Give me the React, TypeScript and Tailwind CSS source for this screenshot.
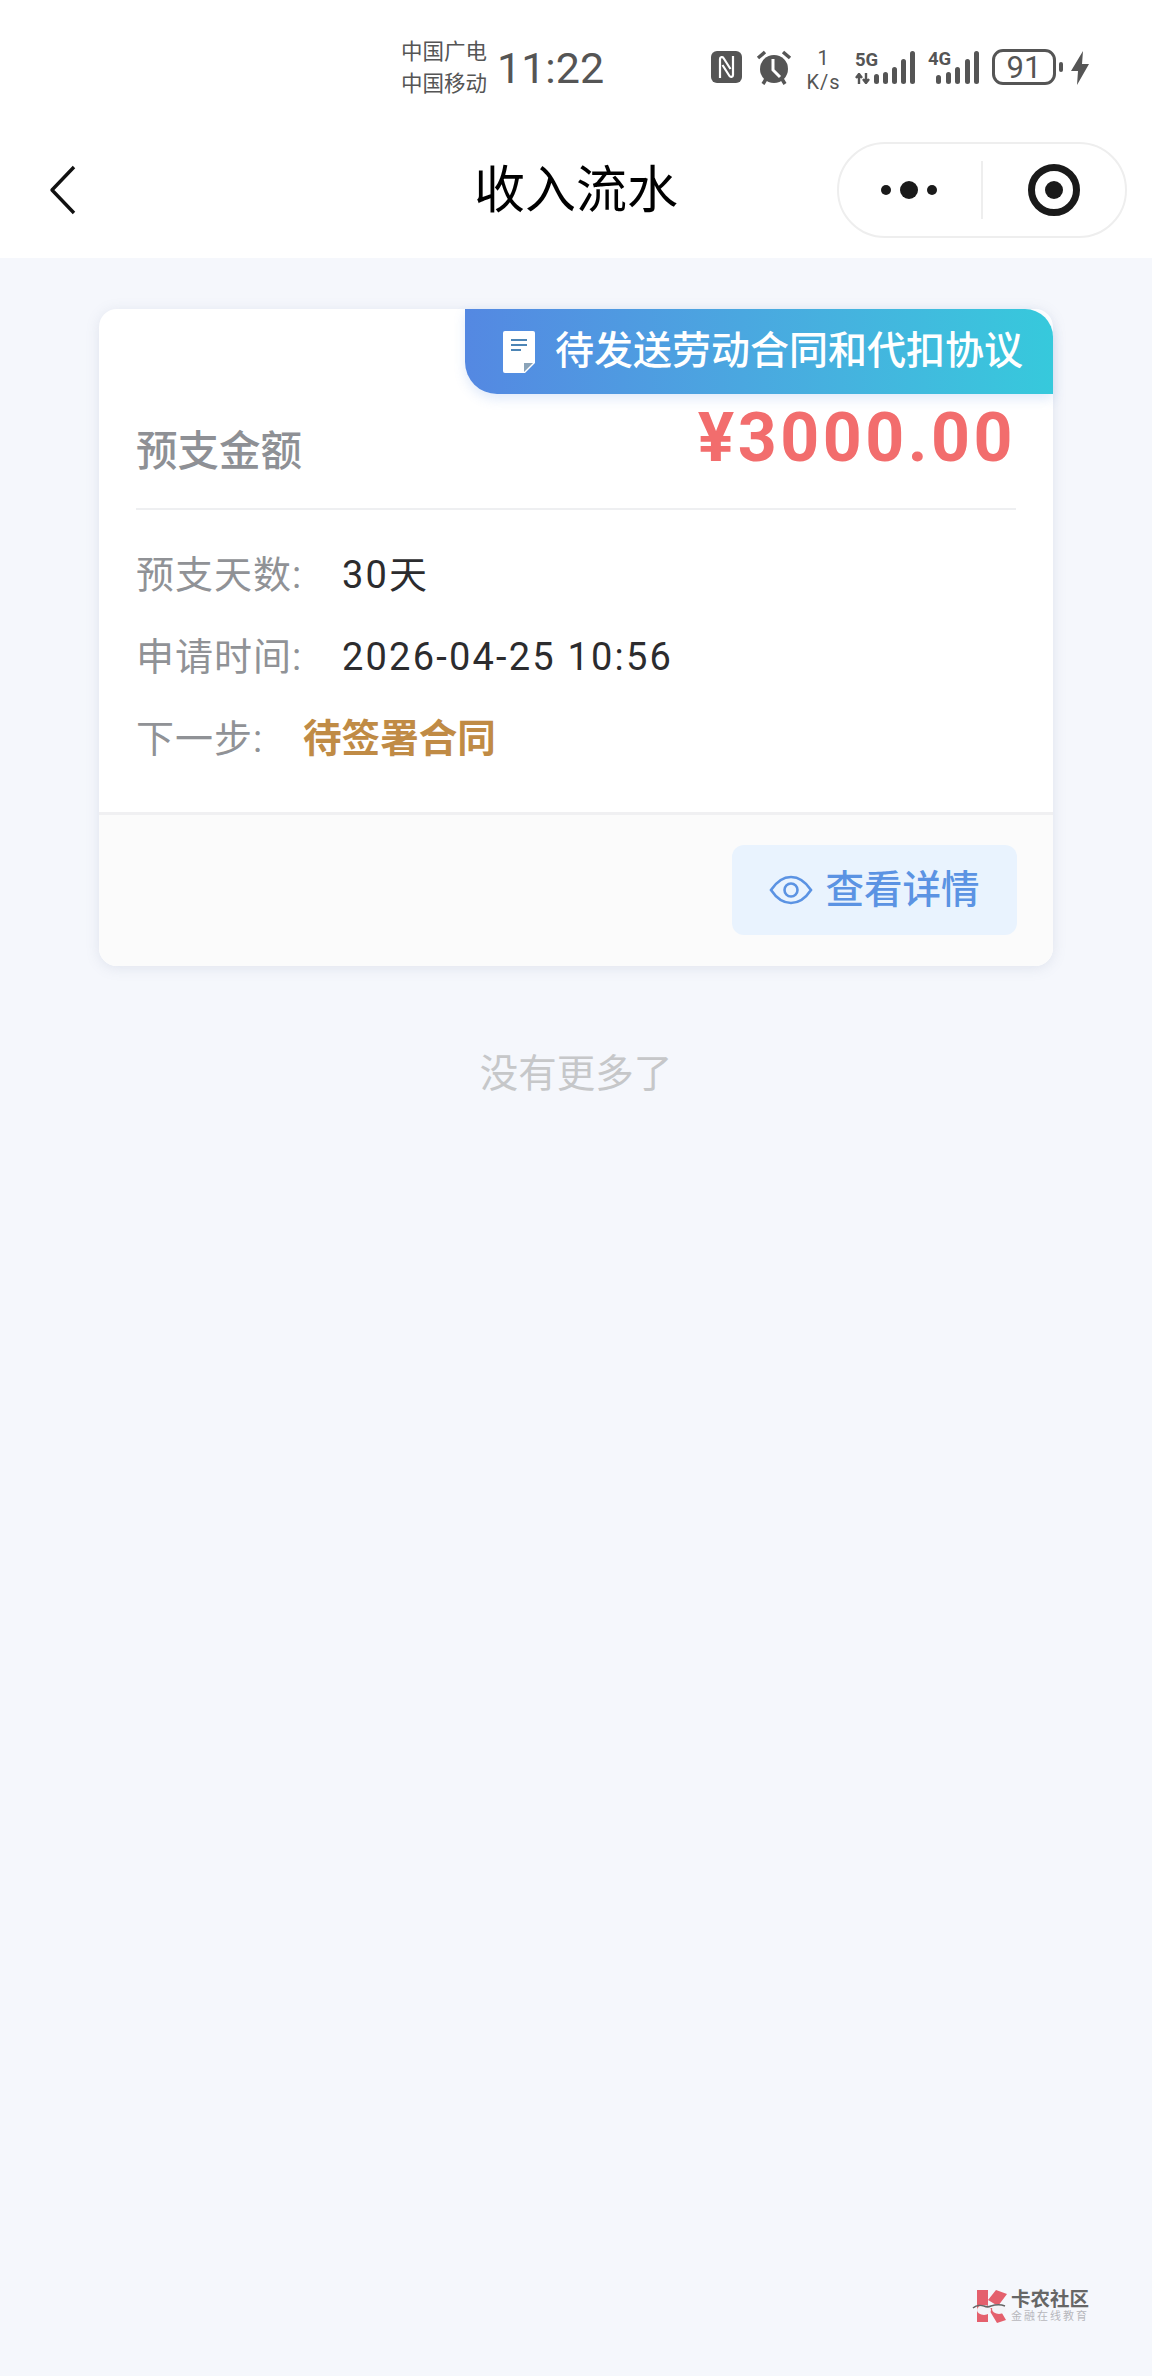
import React from 'react';

const sans = "font-['Roboto','Noto_Sans_CJK_SC',sans-serif]";

const SignalBars: React.FC<{ heights: number[]; gap: string }> = ({ heights, gap }) => (
  <div className={`flex items-end ${gap}`}>
    {heights.map((h, i) => (
      <div key={i} className="w-[5px] rounded-full bg-[#555555]" style={{ height: h }} />
    ))}
  </div>
);

const StatusBar: React.FC = () => (
  <div className="flex h-[125px] items-start bg-white pl-[401px] pt-[36px] text-[#555555]">
    <div className="flex w-[96px] flex-col text-[21.5px] leading-[32px]">
      <span>中国广电</span>
      <span>中国移动</span>
    </div>
    <div className="mt-[7px] w-[114px] text-[43px] font-normal leading-[50px]">11:22</div>
    <div className="ml-[100px] mt-[13px] flex items-start">
      {/* nfc */}
      <svg width="31" height="32" viewBox="0 0 31 32" className="mt-[2px]">
        <rect width="31" height="32" rx="6" fill="#555555" />
        <path d="M9 27V8c0-2 2.500-2.500 3.500-1l7 11" fill="none" stroke="#fff" strokeWidth="2.2" />
        <path d="M22 5v19c0 2-2.500 2.500-3.500 1l-7-11" fill="none" stroke="#fff" strokeWidth="2.2" />
      </svg>
      {/* alarm */}
      <svg width="37" height="35" viewBox="0 0 37 35" className="ml-[13px] mt-[1px]">
        <circle cx="19" cy="19" r="14" fill="#555555" />
        <path d="M18 9v11l7 7" fill="none" stroke="#fff" strokeWidth="3" />
        <path d="M3 8l7-6M35 8l-7-6" stroke="#555555" strokeWidth="3.5" />
        <path d="M8 34l3-5M30 34l-3-5" stroke="#555555" strokeWidth="3.5" />
      </svg>
      <div className="ml-[15px] -mt-[3px] flex w-[33px] flex-col items-center text-[20px] leading-[24px] tracking-[1px]">
        <span>1</span>
        <span>K/s</span>
      </div>
      <div className="ml-[15px] flex h-[35px] items-end">
        <div className="flex w-[19px] flex-col whitespace-nowrap">
          <span className="text-[18.5px] font-bold leading-[20px]">5G</span>
          <svg width="17" height="11" viewBox="0 0 17 11" className="mt-[3px]" fill="none" stroke="#555555" strokeWidth="2.4">
            <path d="M4 11V2M1 5l3-4 3 4M11 0v9M8 6l3 4 3-4" />
          </svg>
        </div>
        <SignalBars heights={[10, 12, 17, 25, 33]} gap="gap-[4px]" />
      </div>
      <div className="ml-[13px] flex h-[35px] items-end">
        <div className="w-[8px] self-start whitespace-nowrap text-[18.5px] font-bold leading-[20px]">4G</div>
        <SignalBars heights={[9, 12, 17, 25, 33]} gap="gap-[4.5px]" />
      </div>
      <div className="ml-[13px] flex h-[36px] w-[64px] items-center justify-center rounded-[11px] border-[3px] border-[#555555] text-[31px] leading-none">
        91
      </div>
      <div className="ml-[3px] mt-[13px] h-[10px] w-[4px] rounded-full bg-[#555555]" />
      <svg width="18" height="34" viewBox="0 0 18 34" className="ml-[8px] mt-[2px]">
        <path d="M12 0L0 20h7l-1 14 12-21h-7z" fill="#555555" />
      </svg>
    </div>
  </div>
);

const NavBar: React.FC = () => (
  <div className="grid h-[133px] grid-cols-[315px_1fr_315px] items-center bg-white pb-[3px]">
    <div className="pl-[48px]">
      <svg width="28" height="50" viewBox="0 0 28 50" fill="none" stroke="#111111" strokeWidth="3.4" strokeLinejoin="round">
        <path d="M26 2L4 25l22 23" />
      </svg>
    </div>
    <h1 className="text-center text-[51px] font-normal leading-none text-black">收入流水</h1>
    <div className="flex h-[96px] w-[290px] items-center rounded-full border-2 border-[#eeeeee]">
      <div className="flex w-[142px] items-center justify-center gap-[9px] pr-[2px]">
        <div className="h-[10px] w-[10px] rounded-full bg-[#1a1a1a]" />
        <div className="h-[18px] w-[18px] rounded-full bg-[#1a1a1a]" />
        <div className="h-[10px] w-[10px] rounded-full bg-[#1a1a1a]" />
      </div>
      <div className="h-[58px] w-[2px] bg-[#eeeeee]" />
      <div className="flex flex-1 items-center justify-center">
        <div className="flex h-[52px] w-[52px] items-center justify-center rounded-full border-[7px] border-[#1a1a1a]">
          <div className="h-[18px] w-[18px] rounded-full bg-[#1a1a1a]" />
        </div>
      </div>
    </div>
  </div>
);

const InfoRow: React.FC<{ label: string; gap: string; children: React.ReactNode }> = ({ label, gap, children }) => (
  <div className="flex h-[82px] items-center">
    <span className={`${gap} tracking-[1px] text-[#909296]`}>{label}</span>
    {children}
  </div>
);

const App: React.FC = () => {
  return (
    <div className={`relative h-[2376px] w-[1152px] overflow-hidden bg-[#f5f7fc] ${sans}`}>
      <StatusBar />
      <NavBar />

      <div className="relative mx-auto mt-[51px] w-[954px] rounded-[18px] bg-white shadow-[0_2px_14px_rgba(120,130,160,0.16)]">
        {/* badge */}
        <div className="absolute right-0 top-0 flex h-[85px] w-[588px] items-center rounded-bl-[32px] rounded-tr-[28px] bg-gradient-to-r from-[#5488e2] to-[#36c9dc] pl-[38px] shadow-[0_5px_12px_rgba(84,136,226,0.18)]">
          <svg width="32" height="42" viewBox="0 0 32 42">
            <path d="M2 0h28a2 2 0 0 1 2 2v30L22 42H2a2 2 0 0 1-2-2V2a2 2 0 0 1 2-2z" fill="#fff" />
            <path d="M8 9h16M8 14h16M8 19h10" stroke="#4d85b5" strokeWidth="2" />
            <path d="M21 32h9l-9 9z" fill="#8aa3b8" />
          </svg>
          <span className="ml-[20px] text-[39px] font-medium leading-none text-white">待发送劳动合同和代扣协议</span>
        </div>

        <div className="mx-[37px] flex h-[201px] items-start justify-between border-b-2 border-[#eeeff1]">
          <span className="mt-[120px] text-[41.5px] font-medium leading-[46px] text-[#8e9095]">预支金额</span>
          <span className="mt-[90px] text-[68px] font-bold leading-[78px] tracking-[3.5px] text-[#f26d6d]">¥3000.00</span>
        </div>

        <div className="flex h-[305px] flex-col border-b-[3px] border-[#f0f0f2] px-[37px] pt-[24px] text-[38px]">
          <InfoRow label="预支天数:" gap="w-[206px]">
            <span className="tracking-[2.2px] text-[#2c2c2e]">30天</span>
          </InfoRow>
          <InfoRow label="申请时间:" gap="w-[206px]">
            <span className="tracking-[2.2px] text-[#2c2c2e]">2026-04-25 10:56</span>
          </InfoRow>
          <InfoRow label="下一步:" gap="w-[167px]">
            <span className="text-[38.6px] font-bold text-[#c08b45]">待签署合同</span>
          </InfoRow>
        </div>

        <div className="flex h-[151px] items-start justify-end rounded-b-[18px] bg-[#fbfbfb] px-[36px] pt-[30px]">
          <button className="flex h-[90px] w-[285px] items-center justify-center gap-[12px] rounded-[12px] bg-[#e9f3fe] text-[38.5px] font-medium text-[#5b93e3]">
            <svg width="44" height="30" viewBox="0 0 44 30" fill="none" stroke="#5b93e3" strokeWidth="2.6">
              <path d="M2 15C8 6 14 2 22 2s14 4 20 13c-6 9-12 13-20 13S8 24 2 15z" />
              <circle cx="22" cy="15" r="6.5" />
            </svg>
            查看详情
          </button>
        </div>
      </div>

      <p className="mt-[83px] text-center text-[38.5px] leading-[50px] text-[#c6c7c9]">没有更多了</p>

      {/* watermark */}
      <div className="absolute left-[972px] top-[2288px] flex items-center gap-[3px]">
        <svg width="36" height="36" viewBox="0 0 36 36">
          <path d="M5 2h11v32H5z" fill="#e4606d" />
          <path d="M16 12L24 2l11 4-9 12zM16 20h11l7 12-9 3z" fill="#e4606d" />
          <ellipse cx="12" cy="22" rx="7" ry="5" fill="#f3f4f8" />
          <ellipse cx="27" cy="21" rx="7" ry="5" fill="#f3f4f8" />
          <path d="M1 20c3-3 8-3 11-2 2 1 5 1 7 0 3-1 9-2 14 0" fill="none" stroke="#666" strokeWidth="1.5" />
        </svg>
        <div className="flex flex-col">
          <span className="text-[19.5px] font-bold leading-[20px] text-[#666666]">卡农社区</span>
          <span className="text-[11px] leading-[13px] tracking-[2px] text-[#b8b8bc]">金融在线教育</span>
        </div>
      </div>
    </div>
  );
};

export default App;
